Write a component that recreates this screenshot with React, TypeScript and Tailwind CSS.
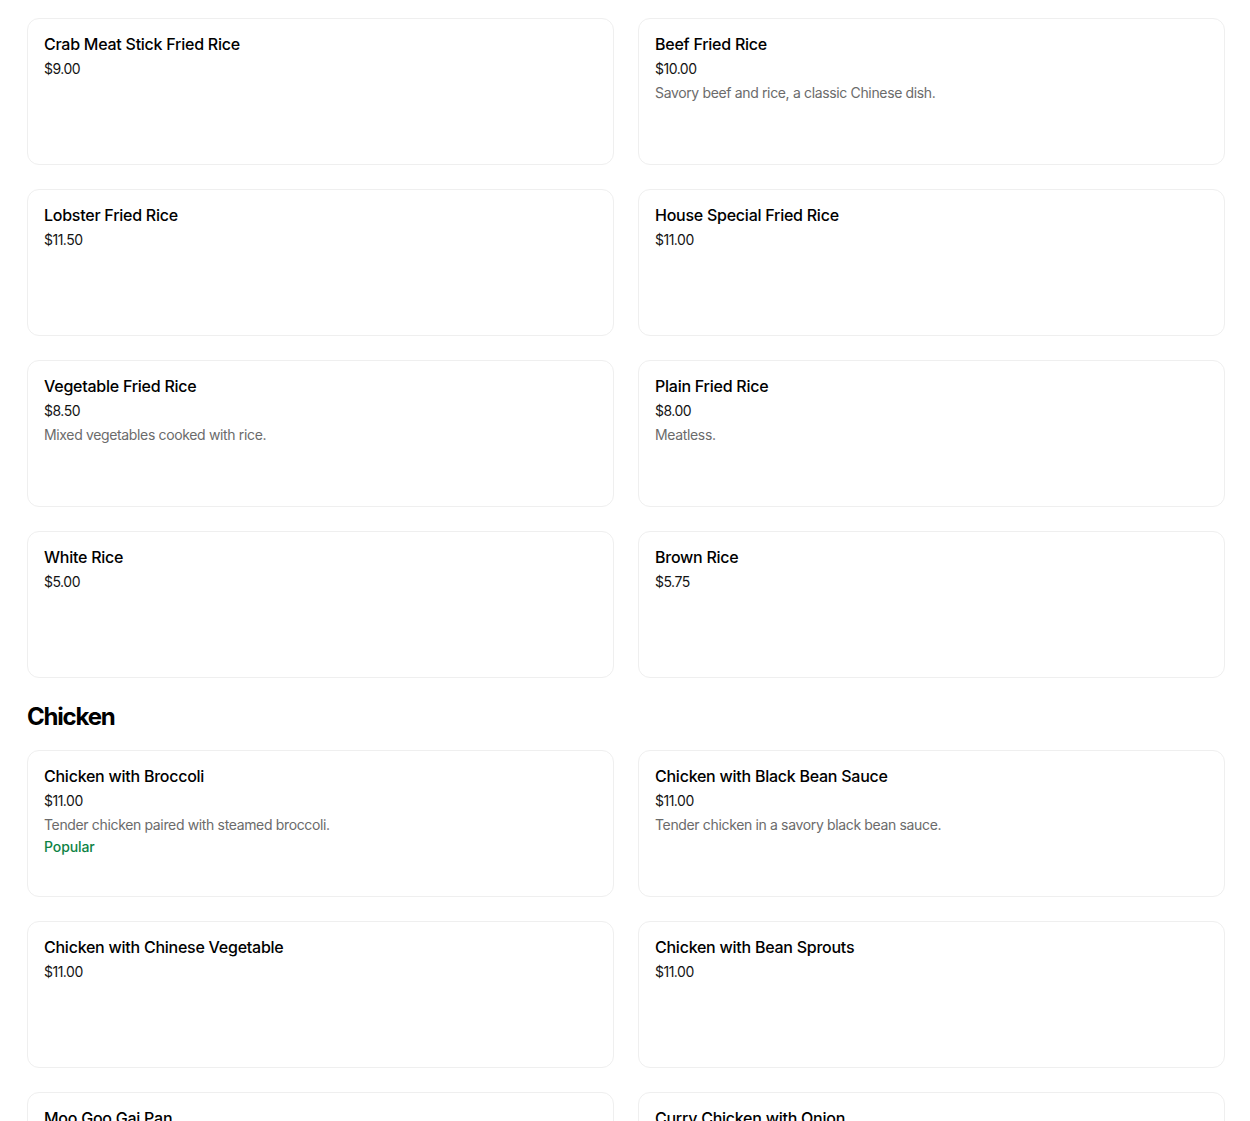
import React from "react";

type Item = {
  name: string;
  price: string;
  description?: string;
  popular?: boolean;
};

type Section = {
  title?: string;
  items: Item[];
};

const SECTIONS: Section[] = [
  {
    items: [
      { name: "Crab Meat Stick Fried Rice", price: "$9.00" },
      {
        name: "Beef Fried Rice",
        price: "$10.00",
        description: "Savory beef and rice, a classic Chinese dish.",
      },
      { name: "Lobster Fried Rice", price: "$11.50" },
      { name: "House Special Fried Rice", price: "$11.00" },
      {
        name: "Vegetable Fried Rice",
        price: "$8.50",
        description: "Mixed vegetables cooked with rice.",
      },
      { name: "Plain Fried Rice", price: "$8.00", description: "Meatless." },
      { name: "White Rice", price: "$5.00" },
      { name: "Brown Rice", price: "$5.75" },
    ],
  },
  {
    title: "Chicken",
    items: [
      {
        name: "Chicken with Broccoli",
        price: "$11.00",
        description: "Tender chicken paired with steamed broccoli.",
        popular: true,
      },
      {
        name: "Chicken with Black Bean Sauce",
        price: "$11.00",
        description: "Tender chicken in a savory black bean sauce.",
      },
      { name: "Chicken with Chinese Vegetable", price: "$11.00" },
      { name: "Chicken with Bean Sprouts", price: "$11.00" },
      { name: "Moo Goo Gai Pan", price: "$11.00" },
      { name: "Curry Chicken with Onion", price: "$11.00" },
    ],
  },
];

function MenuCard({ item }: { item: Item }) {
  return (
    <div className="h-[147px] rounded-xl border border-[#efefef] bg-white px-4 pt-[15px]">
      <div className="text-[16px] font-medium leading-5 tracking-[-0.25px] text-black">
        {item.name}
      </div>
      <div className="mt-[5px] text-[14px] leading-5 tracking-[-0.5px] text-[#141414]">
        {item.price}
      </div>
      {item.description && (
        <div className="mt-1 text-[14px] leading-5 tracking-[-0.35px] text-[#6b6b6b]">
          {item.description}
        </div>
      )}
      {item.popular && (
        <div className="mt-[2px] text-[14px] font-medium leading-5 tracking-[-0.1px] text-[#0e8345]">
          Popular
        </div>
      )}
    </div>
  );
}

export default function App() {
  return (
    <div
      className="min-h-screen bg-white pl-[27px] pr-[25px] pt-[18px] pb-10"
      style={{ fontFamily: "Inter, 'Noto Sans', sans-serif" }}
    >
      {SECTIONS.map((section, i) => (
        <div key={i}>
          {section.title && (
            <h2 className="mt-[23px] mb-[17px] text-[24px] font-bold leading-8 tracking-[-1.2px] text-black">
              {section.title}
            </h2>
          )}
          <div className="grid grid-cols-2 gap-6">
            {section.items.map((item) => (
              <MenuCard key={item.name} item={item} />
            ))}
          </div>
        </div>
      ))}
    </div>
  );
}
